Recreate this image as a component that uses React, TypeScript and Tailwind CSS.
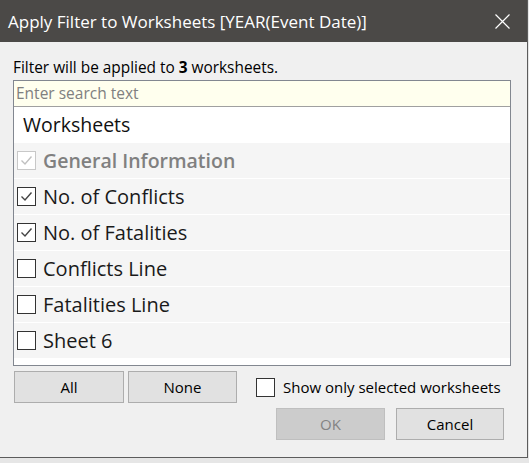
import React from "react";

const ui = { fontFamily: '"Open Sans", "Noto Sans", sans-serif' };

type Item = { label: string; checked: boolean; disabled?: boolean };

const items: Item[] = [
  { label: "General Information", checked: true, disabled: true },
  { label: "No. of Conflicts", checked: true },
  { label: "No. of Fatalities", checked: true },
  { label: "Conflicts Line", checked: false },
  { label: "Fatalities Line", checked: false },
  { label: "Sheet 6", checked: false },
];

function Check({ checked, disabled }: { checked: boolean; disabled?: boolean }) {
  return (
    <div
      className={
        "w-[19px] h-[19px] shrink-0 border bg-white flex items-center justify-center " +
        (disabled ? "border-[#c8c8c8]" : "border-[#333333]")
      }
    >
      {checked && (
        <svg width="15" height="15" viewBox="0 0 15 15" fill="none">
          <path
            d="M2.5 7.5 L6 11 L12.5 3.5"
            stroke={disabled ? "#c0c0c0" : "#444444"}
            strokeWidth="1.4"
          />
        </svg>
      )}
    </div>
  );
}

function Button({ children, disabled, width }: { children: React.ReactNode; disabled?: boolean; width: string }) {
  return (
    <button
      className={
        "h-[32px] border text-[15px] flex items-center justify-center " +
        width +
        (disabled
          ? " bg-[#cccccc] border-[#bfbfbf] text-[#838383]"
          : " bg-[#e1e1e1] border-[#adadad] text-black")
      }
    >
      {children}
    </button>
  );
}

export default function App() {
  return (
    <div className="w-[529px] h-[463px] bg-[#e6e6e6] overflow-hidden" style={ui}>
      <div className="w-[528px] h-[458px] bg-[#f0f0f0] border-r border-b border-[#5c5c5c] flex flex-col">
        <div className="h-[42px] shrink-0 bg-[#4b4947] flex items-center justify-between pl-[8px] pr-[17px]">
          <span className="text-white text-[17px] leading-none">Apply Filter to Worksheets [YEAR(Event Date)]</span>
          <svg width="15" height="15" viewBox="0 0 15 15" fill="none">
            <path d="M0.5 0.5 L14.5 14.5 M14.5 0.5 L0.5 14.5" stroke="#ffffff" strokeWidth="1.2" />
          </svg>
        </div>

        <div className="flex flex-col pl-[13px] pr-[16px] pt-[14px]">
          <div className="h-[24px] text-[15.4px] leading-[24px] text-black">
            Filter will be applied to <b>3</b> worksheets.
          </div>

          <div className="h-[286px] border border-[#828790] bg-white flex flex-col">
            <div className="h-[26px] shrink-0 bg-[#ffffee] border-b border-[#a0a0a0] flex items-center pl-[2px] text-[15.5px] text-[#808080]">
              Enter search text
            </div>
            <div className="h-[36px] shrink-0 bg-white flex items-center pl-[9px] text-[19.5px] text-[#111111]">
              Worksheets
            </div>
            {items.map((it) => (
              <div
                key={it.label}
                className="h-[36px] shrink-0 bg-[#f5f5f5] border-b border-white flex items-center gap-[7px] pl-[3px]"
              >
                <Check checked={it.checked} disabled={it.disabled} />
                <span
                  className={
                    it.disabled ? "text-[19.5px] font-semibold text-[#808080]" : "text-[20px] text-[#1a1a1a]"
                  }
                >
                  {it.label}
                </span>
              </div>
            ))}
          </div>

          <div className="flex items-center mt-[5px] pl-px">
            <Button width="w-[110px]">All</Button>
            <div className="w-[4px]" />
            <Button width="w-[109px]">None</Button>
            <div className="ml-[19px] flex items-center gap-[8px]">
              <Check checked={false} />
              <span className="text-[15px] text-black">Show only selected worksheets</span>
            </div>
          </div>

          <div className="flex justify-end gap-[11px] mt-[5px] pr-[7px]">
            <Button width="w-[109px]" disabled>
              OK
            </Button>
            <Button width="w-[108px]">Cancel</Button>
          </div>
        </div>
      </div>
    </div>
  );
}
